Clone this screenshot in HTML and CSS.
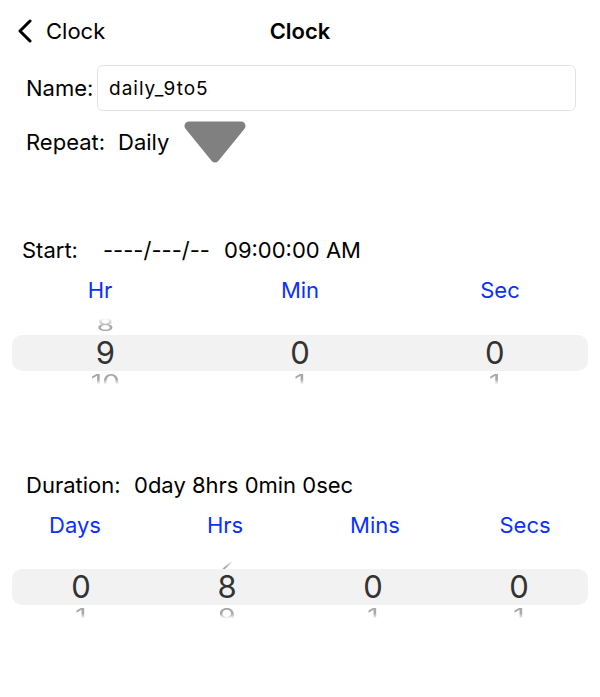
FILE: index.html
```html
<!DOCTYPE html>
<html>
<head>
<meta charset="utf-8">
<link rel="stylesheet" href="styles.css">
</head>
<body>
<div class="screen">
  <header class="nav">
    <div class="back">
      <svg class="chev" width="16" height="24" viewBox="0 0 16 24"><path d="M13 2 L3 12 L13 22" fill="none" stroke="#000" stroke-width="3" stroke-linecap="round" stroke-linejoin="round"/></svg>
      <span>Clock</span>
    </div>
    <div class="title">Clock</div>
  </header>

  <div class="row name-row">
    <span class="label">Name:</span>
    <div class="input">daily_9to5</div>
  </div>

  <div class="row repeat-row">
    <span class="label">Repeat:</span>
    <span class="value">Daily</span>
    <svg class="tri" width="64" height="42" viewBox="0 0 64 42"><polygon points="6,5 58,5 32,37" fill="#808080" stroke="#808080" stroke-width="9" stroke-linejoin="round"/></svg>
  </div>

  <div class="row start-row">
    <span class="label">Start:</span>
    <span class="date">----/---/--</span>
    <span class="time">09:00:00 AM</span>
  </div>

  <div class="col-labels three">
    <span>Hr</span><span>Min</span><span>Sec</span>
  </div>
  <div class="wheel three first">
    <div class="band"></div>
    <div class="wcol"><div class="prev"><span>8</span></div><div class="cur">9</div><div class="next"><span>10</span></div></div>
    <div class="wcol"><div class="prev"><span></span></div><div class="cur">0</div><div class="next"><span>1</span></div></div>
    <div class="wcol"><div class="prev"><span></span></div><div class="cur">0</div><div class="next"><span>1</span></div></div>
  </div>

  <div class="row duration-row">
    <span class="label">Duration:</span>
    <span class="value">0day 8hrs 0min 0sec</span>
  </div>

  <div class="col-labels four">
    <span>Days</span><span>Hrs</span><span>Mins</span><span>Secs</span>
  </div>
  <div class="wheel four second">
    <div class="band"></div>
    <div class="wcol"><div class="prev"><span></span></div><div class="cur">0</div><div class="next"><span>1</span></div></div>
    <div class="wcol"><div class="prev"><span>7</span></div><div class="cur">8</div><div class="next"><span>9</span></div></div>
    <div class="wcol"><div class="prev"><span></span></div><div class="cur">0</div><div class="next"><span>1</span></div></div>
    <div class="wcol"><div class="prev"><span></span></div><div class="cur">0</div><div class="next"><span>1</span></div></div>
  </div>
</div>
</body>
</html>
```
FILE: styles.css
```css
* { box-sizing: border-box; }
html, body { margin: 0; padding: 0; background: #fff; }
body {
  font-family: Inter, "Noto Sans", "Liberation Sans", sans-serif;
  color: #000;
  width: 600px;
  height: 697px;
  overflow: hidden;
}
.screen { width: 600px; }

.nav {
  position: relative;
  height: 62px;
  display: flex;
  align-items: center;
}
.back {
  display: flex;
  align-items: center;
  padding-left: 17px;
  font-size: 22px;
  gap: 13px;
}
.chev { display: block; }
.title {
  position: absolute;
  left: 0; right: 0;
  top: 0; height: 62px;
  line-height: 62px;
  text-align: center;
  font-size: 22px;
  font-weight: 600;
  pointer-events: none;
}

.row {
  display: flex;
  align-items: center;
  font-size: 22px;
  padding-left: 26px;
  white-space: nowrap;
}
.name-row { margin-top: 3px; height: 46px; }
.name-row .label { width: 71px; }
.input {
  width: 479px;
  height: 46px;
  border: 1px solid #e3e3e3;
  border-radius: 6px;
  display: flex;
  align-items: center;
  padding-left: 11px;
  font-size: 19px;
  letter-spacing: 1px;
}
.repeat-row { margin-top: 10px; height: 42px; }
.repeat-row .label { width: 92px; }
.tri { margin-left: 14px; display: block; }

.start-row { margin-top: 72px; height: 30px; padding-left: 22px; }
.start-row .label { width: 81px; }
.start-row .date { width: 121px; }

.col-labels {
  display: grid;
  margin-top: 10px;
  height: 30px;
  align-items: center;
  color: #0a30ff;
  font-size: 22px;
  text-align: center;
}
.col-labels.three { grid-template-columns: repeat(3, 1fr); }
.col-labels.four { grid-template-columns: repeat(4, 1fr); }

.wheel {
  position: relative;
  display: grid;
  padding: 0 8px;
  margin-top: 10px;
}
.wheel.three { grid-template-columns: repeat(3, 1fr); }
.wheel.four { grid-template-columns: repeat(4, 1fr); margin-top: 9px; }
.band {
  position: absolute;
  left: 12px; right: 12px;
  top: 20px; height: 36px;
  background: #f2f2f2;
  border-radius: 10px;
}
.wcol {
  position: relative;
  display: flex;
  flex-direction: column;
  align-items: center;
  text-align: center;
}
.cur {
  position: relative;
  height: 36px;
  line-height: 36px;
  font-size: 31px;
  color: #333;
}
.prev, .next {
  height: 20px;
  width: 100%;
  overflow: hidden;
  position: relative;
  color: #a8a8a8;
  font-size: 28px;
}
.prev span, .next span {
  position: absolute;
  left: 0; right: 0;
  line-height: 28px;
}
.prev span {
  bottom: 2px;
  transform: scaleY(0.6);
  transform-origin: bottom center;
  -webkit-mask-image: linear-gradient(to bottom, transparent 10%, #000 60%);
  mask-image: linear-gradient(to bottom, transparent 10%, #000 60%);
}
.next span {
  top: 1px;
  transform: scaleY(0.75);
  transform-origin: top center;
  -webkit-mask-image: linear-gradient(to bottom, #000 35%, transparent 60%);
  mask-image: linear-gradient(to bottom, #000 35%, transparent 60%);
}
.second .prev span {
  bottom: -2px;
  transform: scaleY(0.6) skewX(-8deg);
  -webkit-mask-image: linear-gradient(to bottom, transparent 40%, #000 75%);
  mask-image: linear-gradient(to bottom, transparent 40%, #000 75%);
}

.duration-row { margin-top: 79px; height: 30px; }
.duration-row .label { width: 108px; }
```
